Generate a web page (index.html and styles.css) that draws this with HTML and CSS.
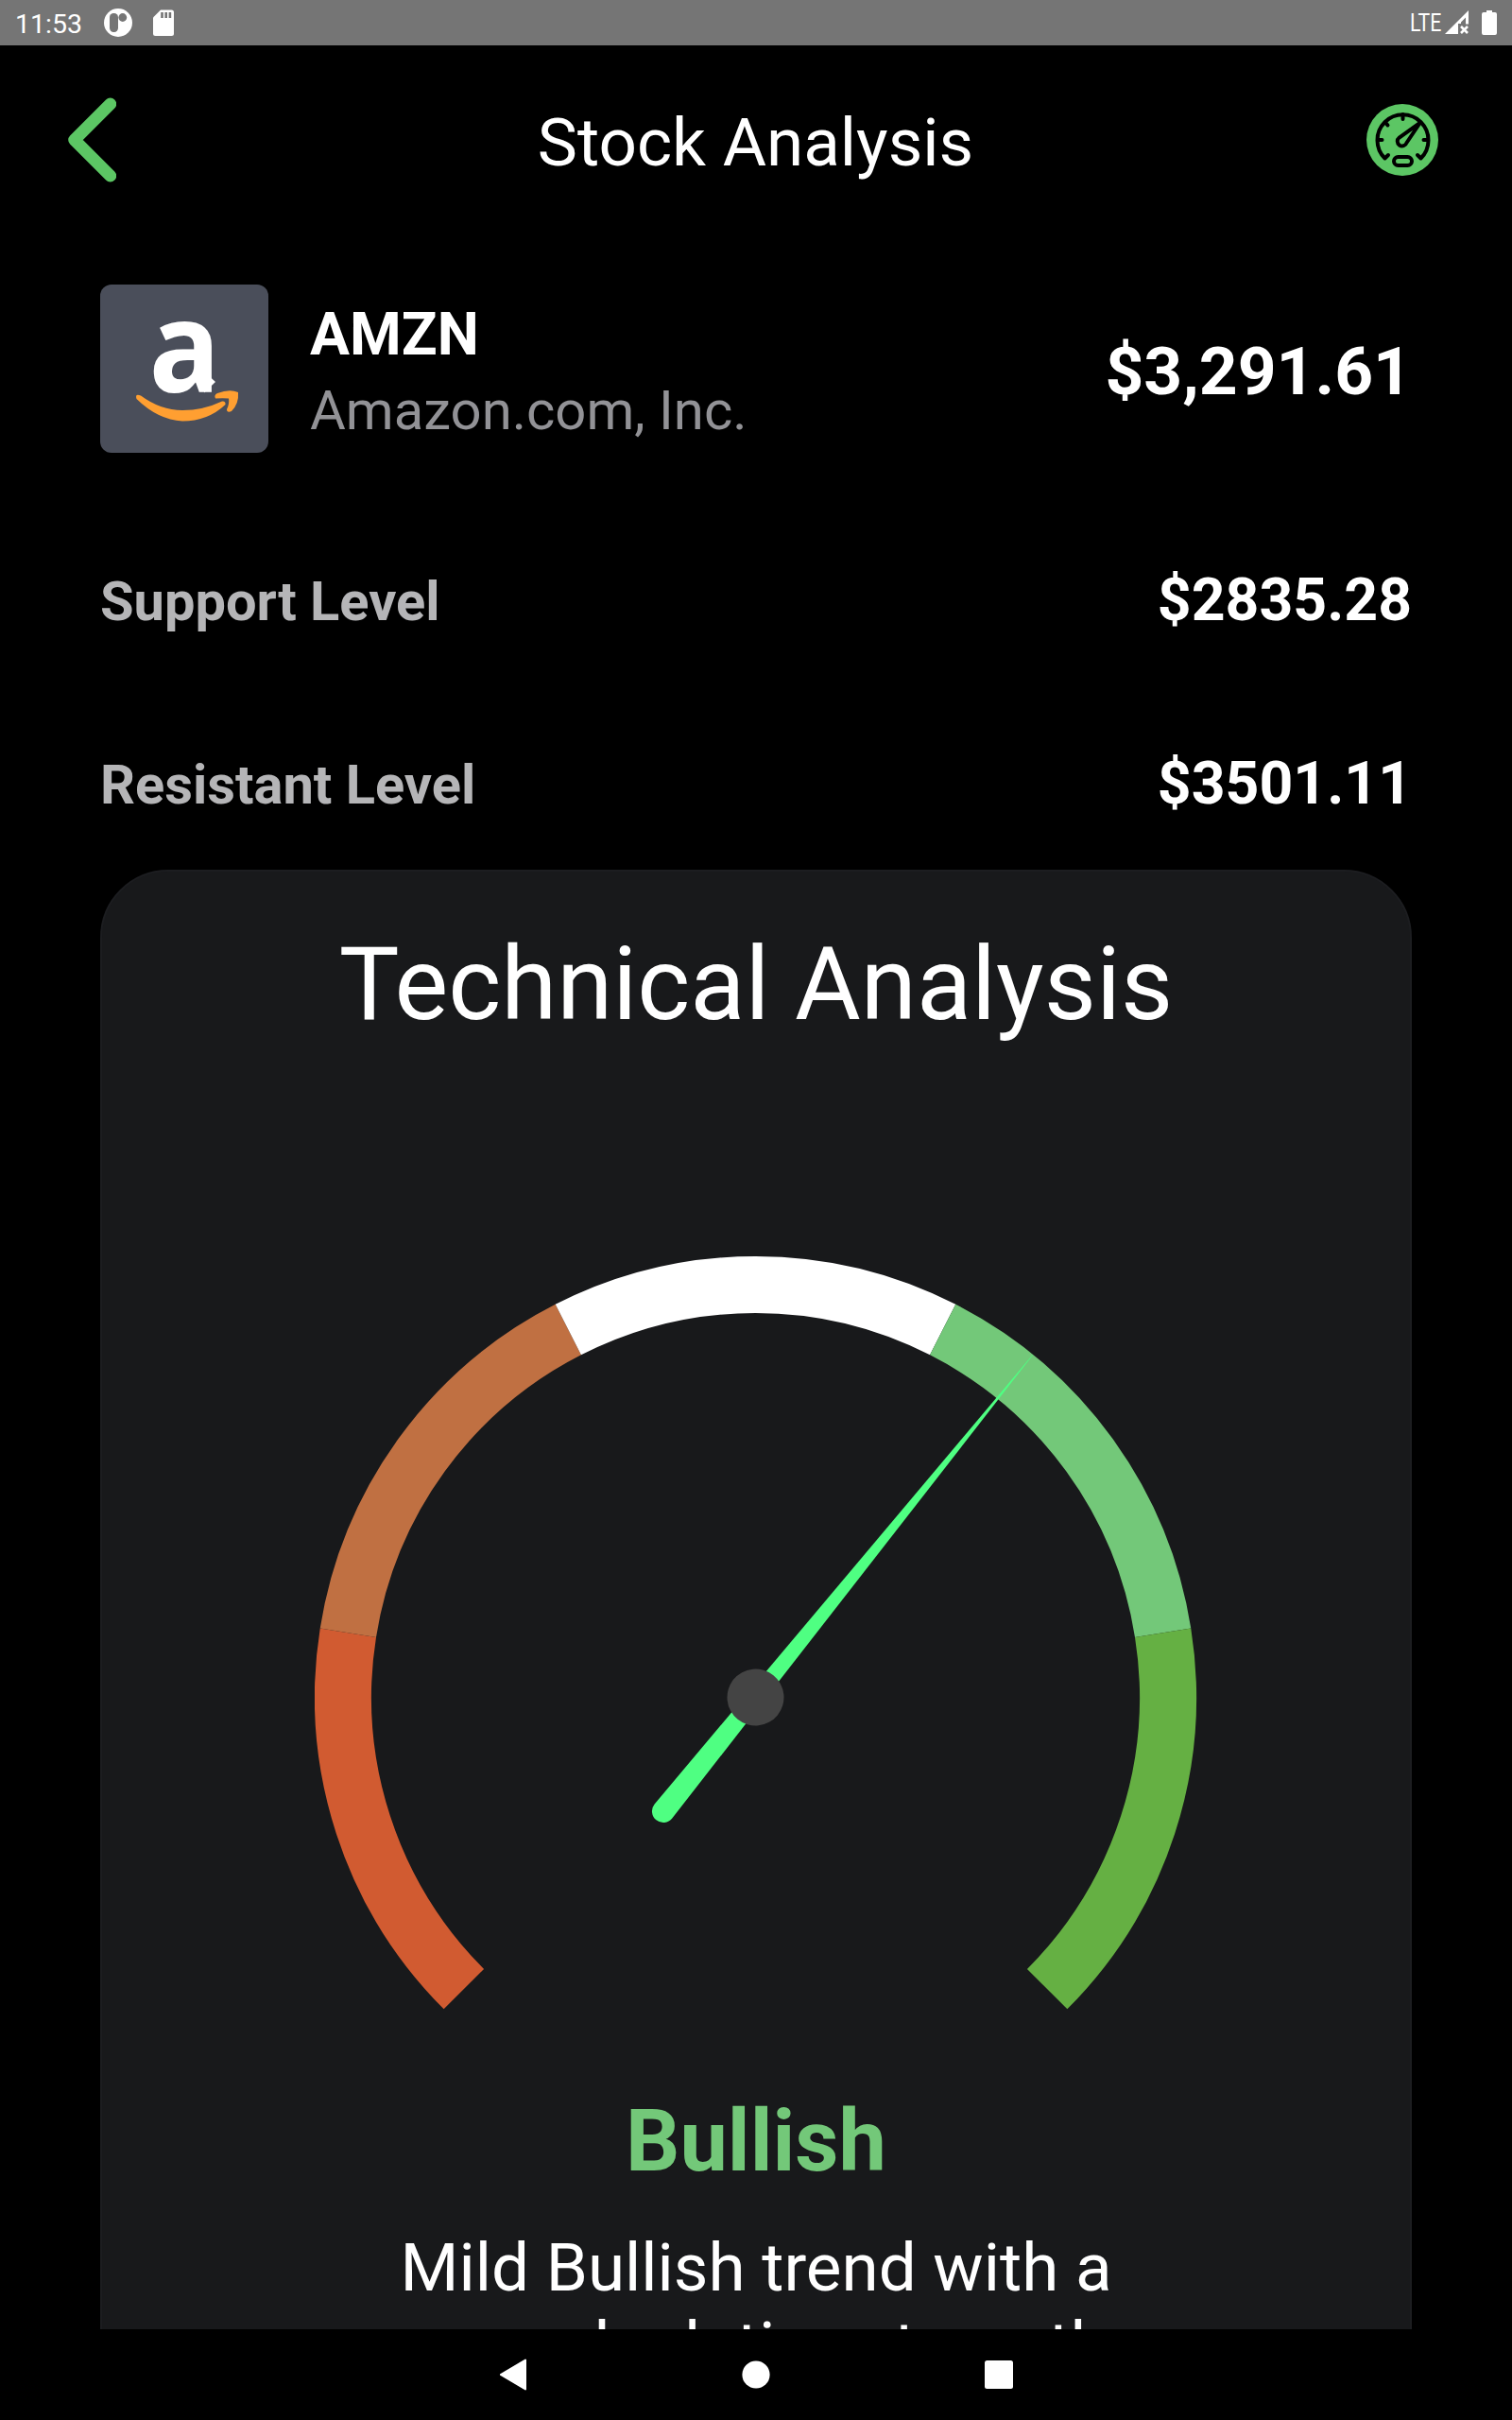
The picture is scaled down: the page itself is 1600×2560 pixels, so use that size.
FILE: index.html
```
<!DOCTYPE html>
<html lang="en">
<head>
    <meta charset="utf-8">
    <title>Stock Analysis</title>
    <meta name="viewport" content="width=device-width, initial-scale=1">
    <link rel="stylesheet" href="styles.css">
</head>
<body>
    <div class="status-bar">
        <span class="clock">11:53</span>
        <svg class="status-icon" width="30" height="32" viewBox="0 0 30 32">
            <circle cx="15" cy="16" r="15" fill="#fff"/>
            <rect x="6" y="6" width="9" height="20" rx="4.2" fill="#757575"/>
            <circle cx="19.8" cy="10.5" r="4.4" fill="#757575"/>
        </svg>
        <svg class="sd-icon" width="22" height="28" viewBox="0 0 22 28">
            <path d="M8 0.5H19.5Q22 0.5 22 3V25.5Q22 28 19.5 28H2.5Q0 28 0 25.5V8.5Z" fill="#fff"/>
            <path d="M8.2 3H10.8V9H8.2ZM12.4 3H15V9H12.4ZM16.6 3H19.2V9H16.6Z" fill="#757575"/>
        </svg>
        <span class="network">LTE</span>
        <svg class="signal-icon" width="26" height="26" viewBox="0 0 26 26">
            <path d="M25 0V14.5H22V7.5L17 12.5V14H14V25H0Z" fill="#fff"/>
            <path d="M17 17L24 24M24 17L17 24" stroke="#fff" stroke-width="2.6"/>
        </svg>
        <svg class="battery-icon" width="16" height="26" viewBox="0 0 16 26">
            <path d="M5 0H11V2H14Q16 2 16 4V24Q16 26 14 26H2Q0 26 0 24V4Q0 2 2 2H5Z" fill="#fff"/>
        </svg>
    </div>

    <main class="screen">
        <header class="app-header">
            <svg width="52" height="90" viewBox="0 0 52 90">
                <path d="M45.700 7L7.700 45L45.700 83" fill="none" stroke="#5cc664" stroke-width="13" stroke-linecap="round" stroke-linejoin="round"/>
            </svg>
            <h1>Stock Analysis</h1>
            <svg class="gauge-btn" width="76" height="76" viewBox="0 0 76 76">
                <circle cx="38" cy="38" r="38" fill="#5cc664"/>
                <g fill="none" stroke="#000" stroke-width="4" stroke-linecap="round" stroke-linejoin="round">
                    <path d="M23 54L19.500 57.500A27 27 0 1 1 57.500 57.500L54 54"/>
                    <path d="M12 38H16.500M60.500 38H65M38.500 11V16M20 19.500L22.500 22.500"/>
                    <path d="M57 19.500L34.700 35.500A5 5 0 1 0 42.500 41Z"/>
                    <rect x="29" y="56" width="19" height="9" rx="4.500"/>
                </g>
            </svg>
        </header>

        <section class="stock">
            <svg class="logo" width="178" height="178" viewBox="0 0 178 178">
                <rect width="178" height="178" rx="12" fill="#4a4e5a"/>
                <text class="logo-letter" transform="translate(89.500 113.500) scale(.93 1)">a</text>
                <path d="M110 92L122 103L110 114.500Z" fill="#fff"/>
                <path d="M43 117.500Q64 133 87 133Q109 133 129 123.500Q133 123 132.500 127Q114 144.500 87 144.500Q61 143 38.500 121Q36.500 115 43 117.500Z" fill="#ff9f31"/>
                <path d="M122 120.500Q120 117 124 115Q137 110 146 114Q147 126 139 134Q134 136 134 132Q137 126 136 120.500Q130 120 122 120.500Z" fill="#ff9f31"/>
            </svg>
            <div class="names">
                <div class="ticker">AMZN</div>
                <div class="company">Amazon.com, Inc.</div>
            </div>
            <div class="price">$3,291.61</div>
        </section>

        <div class="level">
            <span class="label">Support Level</span>
            <span class="value">$2835.28</span>
        </div>
        <div class="level">
            <span class="label">Resistant Level</span>
            <span class="value">$3501.11</span>
        </div>

        <section class="card">
            <h2>Technical Analysis</h2>
            <!-- five 54deg segments, needle at 39deg -->
            <svg class="gauge" width="934" height="800" viewBox="0 0 934 800">
                <g fill="none" stroke-width="60" transform="translate(466.500 466.500)">
                    <path d="M-308.650 308.650A436.500 436.500 0 0 1 -431.130 -68.280" stroke="#d15b31"/>
                    <path d="M-431.130 -68.280A436.500 436.500 0 0 1 -198.170 -388.920" stroke="#c07042"/>
                    <path d="M-198.170 -388.920A436.500 436.500 0 0 1 198.170 -388.920" stroke="#fff"/>
                    <path d="M198.170 -388.920A436.500 436.500 0 0 1 431.130 -68.280" stroke="#73c879"/>
                    <path d="M431.130 -68.280A436.500 436.500 0 0 1 308.650 308.650" stroke="#65b043"/>
                </g>
                <g transform="translate(466.500 466.500) rotate(39)">
                    <path d="M-.2 -466H.2L12 155A12 12 0 0 1 -12 155Z" fill="#4fff82"/>
                    <circle r="30" fill="#444"/>
                </g>
            </svg>
            <div class="rating">Bullish</div>
            <p class="summary">Mild Bullish trend with a<br>a good relative strength</p>
        </section>
    </main>

    <nav class="nav-bar">
        <svg width="30" height="34" viewBox="0 0 30 34">
            <path d="M27 1.500V32.500L.800 17Z" fill="#fff" stroke="#fff" stroke-width="2" stroke-linejoin="round"/>
        </svg>
        <svg width="30" height="30" viewBox="0 0 30 30"><circle cx="15" cy="15" r="14.600" fill="#fff"/></svg>
        <svg width="30" height="30" viewBox="0 0 30 30"><rect width="30" height="30" rx="2.500" fill="#fff"/></svg>
    </nav>
</body>
</html>
```
FILE: styles.css
```
* { box-sizing: border-box; }
body {
    margin: 0;
    width: 1600px;
    height: 2560px;
    display: flex;
    flex-direction: column;
    overflow: hidden;
    background: #000;
    color: #fff;
    font-family: Roboto, sans-serif;
}
svg { display: block; flex: none; }
h1, h2, p { margin: 0; font-weight: 400; }

.status-bar {
    display: flex;
    align-items: center;
    flex: none;
    height: 48px;
    padding: 0 16px;
    background: #757575;
}
.clock { font-size: 28.5px; line-height: 44px; padding-top: 3px; width: 94px; }
.status-icon { margin-right: 22px; }
.network {
    margin-left: auto;
    font-size: 25px;
    transform: scaleX(0.85);
    transform-origin: right;
}
.signal-icon { margin: 0 13px 0 4px; }

.screen { flex: 1; min-height: 0; overflow: hidden; }
.app-header {
    display: grid;
    grid-template-columns: 1fr auto 1fr;
    align-items: center;
    height: 200px;
    padding: 0 78px 0 71px;
}
.app-header h1 { font-size: 71px; line-height: 84px; margin-left: 6px; padding-top: 6px; }
.gauge-btn { justify-self: end; }

.stock {
    display: flex;
    align-items: center;
    margin-top: 53px;
    padding: 0 106px;
    height: 178px;
}
.logo-letter {
    font: 700 135px "Open Sans", sans-serif;
    fill: #fff;
    text-anchor: middle;
}
.names { margin-left: 44px; padding-top: 5px; }
.ticker { font-size: 62.5px; line-height: 73px; font-weight: 700; }
.company { font-size: 58px; line-height: 68px; margin-top: 10px; color: #929296; }
.price { margin-left: auto; padding-top: 5px; font-size: 71.3px; font-weight: 700; }

.level {
    display: flex;
    align-items: baseline;
    justify-content: space-between;
    height: 194px;
    padding: 0 106px;
    font-weight: 700;
}
.label { font-size: 57.8px; color: #b5b5b7; }
.value { font-size: 62.5px; line-height: 73px; }
.stock + .level { margin-top: 119px; }
.level + .card { margin-top: -66px; }

.card {
    height: 1800px;
    margin: 0 106px;
    display: flex;
    flex-direction: column;
    align-items: center;
    background: #18191b;
    border: 2px solid #1c1d20;
    border-radius: 72px;
    text-align: center;
}
.card h2 { font-size: 107px; line-height: 126px; margin-top: 57px; }
.gauge { margin-top: 224px; }
.rating { font-size: 90px; line-height: 106px; font-weight: 700; color: #73c879; margin-top: 84px; }
.summary { font-size: 71px; line-height: 83px; margin-top: 38px; }

.nav-bar {
    display: flex;
    align-items: center;
    justify-content: center;
    gap: 226.5px;
    flex: none;
    height: 96px;
    background: #000;
}
```
